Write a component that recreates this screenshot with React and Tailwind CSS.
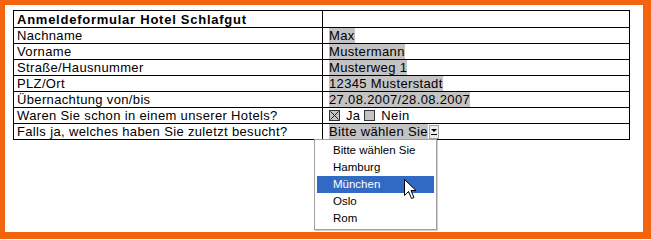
import React from "react";

const rows = [
  { label: "Nachname", value: "Max" },
  { label: "Vorname", value: "Mustermann" },
  { label: "Straße/Hausnummer", value: "Musterweg 1" },
  { label: "PLZ/Ort", value: "12345 Musterstadt" },
  { label: "Übernachtung von/bis", value: "27.08.2007/28.08.2007" },
];

const hotels = ["Bitte wählen Sie", "Hamburg", "München", "Oslo", "Rom"];

function FieldValue({ children }) {
  return <span className="inline-block bg-[#c3c3c3] leading-[15px]">{children}</span>;
}

function CheckBox({ checked }) {
  return (
    <span className="inline-block w-[11px] h-[11px] border border-[#333] bg-[#c3c3c3] align-[-1px] relative">
      {checked && (
        <svg className="absolute inset-0" width="9" height="9" viewBox="0 0 9 9">
          <path d="M0.5 0.5L8.5 8.5M8.5 0.5L0.5 8.5" stroke="#222" strokeWidth="1" />
        </svg>
      )}
    </span>
  );
}

function Cursor() {
  return (
    <svg width="13" height="22" viewBox="0 0 13 22" className="absolute left-[89px] top-[39px]">
      <path
        d="M0.5 0.5 L0.5 16.5 L4.5 12.5 L7.5 19.5 L10 18.5 L7 11.5 L12 11.5 Z"
        fill="#fff"
        stroke="#000"
        strokeWidth="1"
        strokeLinejoin="miter"
      />
    </svg>
  );
}

function HotelSelect() {
  return (
    <span className="inline-flex items-center">
      <span className="bg-[#c3c3c3] leading-[15px]">Bitte wählen Sie</span>
      <span className="inline-flex items-center justify-center w-[10px] h-[14px] bg-[#ececec] border border-[#a0a0a0] ml-[1px]">
        <svg width="6" height="7" viewBox="0 0 6 7">
          <path d="M0 1L6 1L3 4Z" fill="#000" />
          <path d="M0 6.5L6 6.5" stroke="#000" strokeWidth="1" />
        </svg>
      </span>
    </span>
  );
}

export default function App() {
  return (
    <div className="w-[651px] h-[239px] bg-[#f4640f] pt-[5px] pl-[5px] pr-[8px] pb-[7px]">
      <div
        className="relative w-full h-full bg-white pt-[5px] pl-[8px] text-[13px] tracking-[0.35px] text-black"
        style={{ fontFamily: '"Liberation Sans", Arial, sans-serif' }}
      >
        <table className="border-collapse w-[616px] table-fixed">
          <colgroup>
            <col className="w-[309px]" />
            <col className="w-[307px]" />
          </colgroup>
          <tbody>
            <tr className="h-[17px]">
              <td className="border border-black px-[3px] py-0 font-bold tracking-[0.75px] leading-[15px]">
                Anmeldeformular Hotel Schlafgut
              </td>
              <td className="border border-black"></td>
            </tr>
            {rows.map((r) => (
              <tr key={r.label} className="h-[16px]">
                <td className="border border-black px-[3px] py-0 leading-[15px]">{r.label}</td>
                <td className="border border-black px-[6px] py-0 leading-[15px]">
                  <FieldValue>{r.value}</FieldValue>
                </td>
              </tr>
            ))}
            <tr className="h-[16px]">
              <td className="border border-black px-[3px] py-0 leading-[15px]">
                Waren Sie schon in einem unserer Hotels?
              </td>
              <td className="border border-black px-[6px] py-0 leading-[15px]">
                <CheckBox checked /> <span className="ml-[2px]">Ja</span> <CheckBox />{" "}
                <span className="ml-[2px]">Nein</span>
              </td>
            </tr>
            <tr className="h-[16px]">
              <td className="border border-black px-[3px] py-0 leading-[15px]">
                Falls ja, welches haben Sie zuletzt besucht?
              </td>
              <td className="border border-black px-[6px] py-0 leading-[15px]">
                <HotelSelect />
              </td>
            </tr>
          </tbody>
        </table>

        <div className="absolute left-[309px] top-[134px] w-[123px] border border-[#a0a0a0] bg-white py-[2px] px-[2px] text-[11.5px] tracking-normal shadow-[1px_1px_0_#d0d0d0]">
          {hotels.map((h) => (
            <div
              key={h}
              className={
                "h-[17px] leading-[17px] pl-[16px] " +
                (h === "München" ? "bg-[#316ac5] text-white" : "")
              }
            >
              {h}
            </div>
          ))}
          <Cursor />
        </div>
      </div>
    </div>
  );
}
